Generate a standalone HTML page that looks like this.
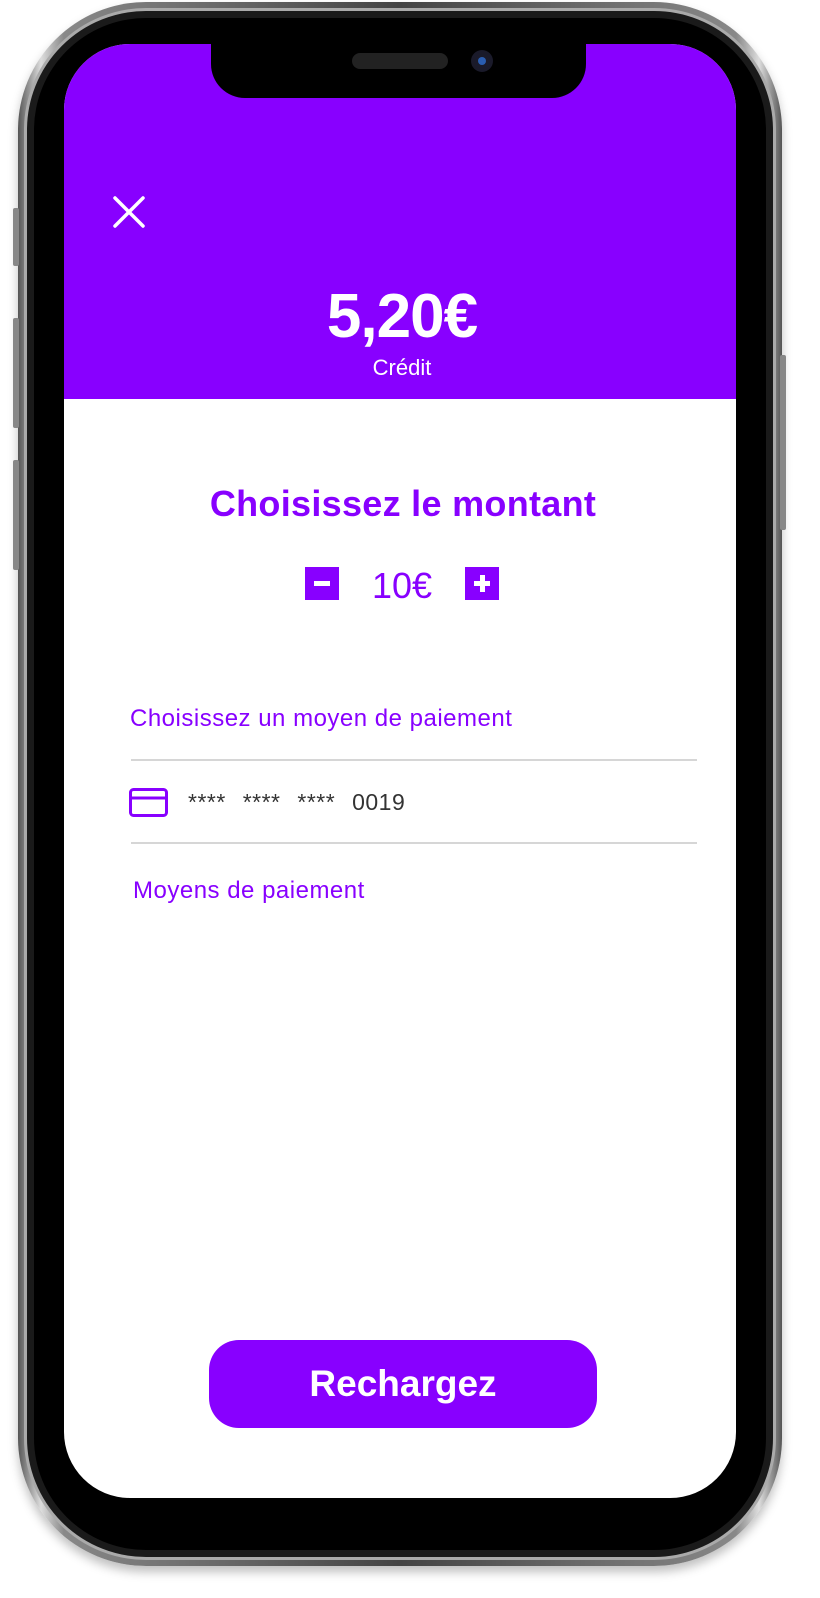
<!DOCTYPE html>
<html><head><meta charset="utf-8"><style>
*{margin:0;padding:0;box-sizing:border-box}
body{width:820px;height:1598px;background:#fff;position:relative;overflow:hidden;font-family:"Liberation Sans",sans-serif}
.a{position:absolute}
.p{color:#8800ff}
</style></head><body>
<div class="a" style="left:18px;top:2px;width:764px;height:1564px;border-radius:128px;background:linear-gradient(90deg,#555,#ddd 3%,#888 6%,#444 50%,#888 94%,#ddd 97%,#555);box-shadow:0 6px 10px rgba(0,0,0,.25)"></div>
<div class="a" style="left:24px;top:8px;width:752px;height:1552px;border-radius:122px;background:#1a1a1a;border:3px solid #aaa"></div>
<div class="a" style="left:34px;top:18px;width:732px;height:1532px;border-radius:112px;background:#000"></div>
<div class="a" style="left:13px;top:208px;width:6px;height:58px;background:#888;border-radius:2px"></div>
<div class="a" style="left:13px;top:318px;width:6px;height:110px;background:#888;border-radius:2px"></div>
<div class="a" style="left:13px;top:460px;width:6px;height:110px;background:#888;border-radius:2px"></div>
<div class="a" style="left:780px;top:355px;width:6px;height:175px;background:#888;border-radius:2px"></div>
<div class="a" style="left:64px;top:44px;width:672px;height:1454px;border-radius:66px;background:#fff;overflow:hidden">
  <div class="a" style="left:0;top:0;width:672px;height:355px;background:#8800ff"></div>
</div>
<div class="a" style="left:211px;top:40px;width:375px;height:58px;background:#000;border-radius:0 0 34px 34px"></div>
<div class="a" style="left:352px;top:53px;width:96px;height:16px;border-radius:8px;background:#222"></div>
<div class="a" style="left:471px;top:50px;width:22px;height:22px;border-radius:50%;background:#1a1a2a"></div>
<div class="a" style="left:478px;top:57px;width:8px;height:8px;border-radius:50%;background:#2a5db0"></div>
<svg class="a" style="left:112px;top:195px" width="34" height="34" viewBox="0 0 34 34"><path d="M3 3L31 31M31 3L3 31" stroke="#fff" stroke-width="3.5" stroke-linecap="round"/></svg>
<div class="a" style="left:150px;width:504px;top:282px;text-align:center;color:#fff;font-weight:bold;font-size:62px;line-height:70px;letter-spacing:-1px">5,20€</div>
<div class="a" style="left:200px;width:404px;top:355px;text-align:center;color:#fff;font-size:22px;line-height:26px">Crédit</div>
<div class="a p" style="left:60px;width:686px;top:483px;text-align:center;font-weight:bold;font-size:36px;line-height:42px;letter-spacing:0.3px">Choisissez le montant</div>
<div class="a" style="left:305px;top:567px;width:34px;height:33px;background:#8800ff"><div class="a" style="left:9px;top:14px;width:16px;height:5px;background:#fff"></div></div>
<div class="a p" style="left:342px;width:120px;top:564px;text-align:center;font-size:36px;line-height:44px">10€</div>
<div class="a" style="left:465px;top:567px;width:34px;height:33px;background:#8800ff"><div class="a" style="left:9px;top:14px;width:16px;height:5px;background:#fff"></div><div class="a" style="left:14.5px;top:8px;width:5px;height:17px;background:#fff"></div></div>
<div class="a p" style="left:130px;top:705px;font-size:24px;line-height:28px;letter-spacing:0.5px">Choisissez un moyen de paiement</div>
<div class="a" style="left:131px;top:759px;width:566px;height:2px;background:#d6d6d6"></div>
<svg class="a" style="left:129px;top:788px" width="40" height="30" viewBox="0 0 40 30"><rect x="1.5" y="1.5" width="36" height="26" rx="3" fill="none" stroke="#8800ff" stroke-width="3"/><path d="M1.5 10H37.5" stroke="#8800ff" stroke-width="3"/></svg>
<div class="a" style="left:188px;top:789px;font-size:23px;line-height:26px;color:#333;word-spacing:10px;letter-spacing:0.5px">**** **** **** 0019</div>
<div class="a" style="left:131px;top:842px;width:566px;height:2px;background:#d6d6d6"></div>
<div class="a p" style="left:133px;top:877px;font-size:24px;line-height:28px;letter-spacing:0.5px">Moyens de paiement</div>
<div class="a" style="left:209px;top:1340px;width:388px;height:88px;border-radius:30px;background:#8800ff;color:#fff;font-weight:bold;font-size:37px;line-height:88px;text-align:center">Rechargez</div>
</body></html>
